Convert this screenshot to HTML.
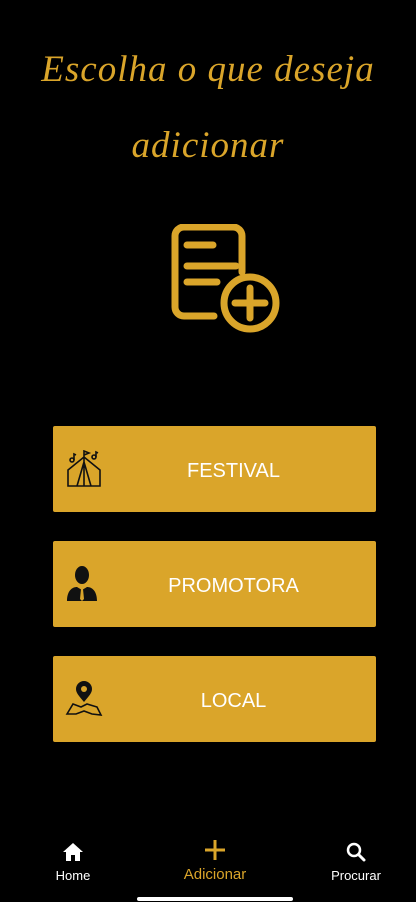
<!DOCTYPE html>
<html><head><meta charset="utf-8"><style>
body{margin:0;width:416px;height:902px;background:#000;position:relative;overflow:hidden;font-family:"Liberation Sans",sans-serif}
.t{position:absolute;left:0;width:416px;text-align:center;color:#DAA52A;font-family:"Liberation Serif",serif;font-style:italic;font-size:37px;font-weight:normal;letter-spacing:1px}
.b{position:absolute;left:53px;width:323px;height:86px;background:#DAA52A;border-radius:2px;color:#fff;font-size:20px;display:flex;align-items:center;justify-content:center;box-sizing:border-box;padding-left:38px;padding-top:5px}
.b svg{position:absolute;left:12px;top:24px}
.n{position:absolute;top:868px;font-size:13px;color:#fff;text-align:center;width:100px}
</style></head><body>
<div class="t" style="top:48px">Escolha o que deseja</div>
<div class="t" style="top:124px">adicionar</div>
<svg style="position:absolute;left:170px;top:224px" width="112" height="110" viewBox="0 0 112 110" fill="none" stroke="#DAA52A" stroke-linecap="round" stroke-width="7">
<path d="M44 92H14a9 9 0 0 1-9-9V12a9 9 0 0 1 9-9h49a9 9 0 0 1 9 9v36"/>
<path d="M17 21h26M17 42h49M17 58h30"/>
<circle cx="80" cy="79" r="26"/><path d="M80 64v30M65 79h30"/>
</svg>
<div class="b" style="top:426px"><svg width="38" height="38" viewBox="0 0 38 38" fill="none" stroke="#111" stroke-width="1.6"><path d="M3 36V20L19 7 35 20v16zM3 36h32M19 7v29M12 36l7-24 7 24M19 7V1l5 2-5 2"/><circle cx="7" cy="10" r="2"/><path d="M9 10V4l2 1"/><circle cx="29" cy="7" r="2"/><path d="M31 7V2l2 1"/></svg>FESTIVAL</div>
<div class="b" style="top:541px"><svg width="34" height="38" viewBox="0 0 34 38" fill="#111"><ellipse cx="17" cy="10" rx="7" ry="9"/><path d="M2 36c0-10 5-14 10-14l5 3 5-3c5 0 10 4 10 14z"/><path d="M16 24h2l1 10-2 2-2-2z" fill="#DAA52A"/></svg>PROMOTORA</div>
<div class="b" style="top:656px"><svg width="38" height="38" viewBox="0 0 38 38"><path d="M19 22c-5-6-8-9-8-13a8 8 0 0 1 16 0c0 4-3 7-8 13z" fill="#111"/><circle cx="19" cy="9" r="3" fill="#DAA52A"/><path d="M2 34l6-10 8 3 6-3 10 3 4 8-9-1-8-3-8 3z" fill="none" stroke="#111" stroke-width="1.6"/></svg>LOCAL</div>
<svg style="position:absolute;left:62px;top:842px" width="22" height="20" viewBox="0 0 22 20"><path d="M11 1L1 10h3v9h5v-6h4v6h5v-9h3z" fill="#fff"/></svg>
<div class="n" style="left:23px">Home</div>
<svg style="position:absolute;left:204px;top:839px" width="22" height="22"><path d="M11 1v20M1 11h20" stroke="#DAA52A" stroke-width="3"/></svg>
<div class="n" style="left:165px;top:866px;font-size:15px;color:#DAA52A">Adicionar</div>
<svg style="position:absolute;left:346px;top:842px" width="20" height="20"><circle cx="8" cy="8" r="6" stroke="#fff" stroke-width="2.5" fill="none"/><path d="M12.5 12.5L18 18" stroke="#fff" stroke-width="3" stroke-linecap="round"/></svg>
<div class="n" style="left:306px">Procurar</div>
<div style="position:absolute;left:137px;top:897px;width:156px;height:4px;border-radius:2px;background:#fff"></div>
</body></html>
